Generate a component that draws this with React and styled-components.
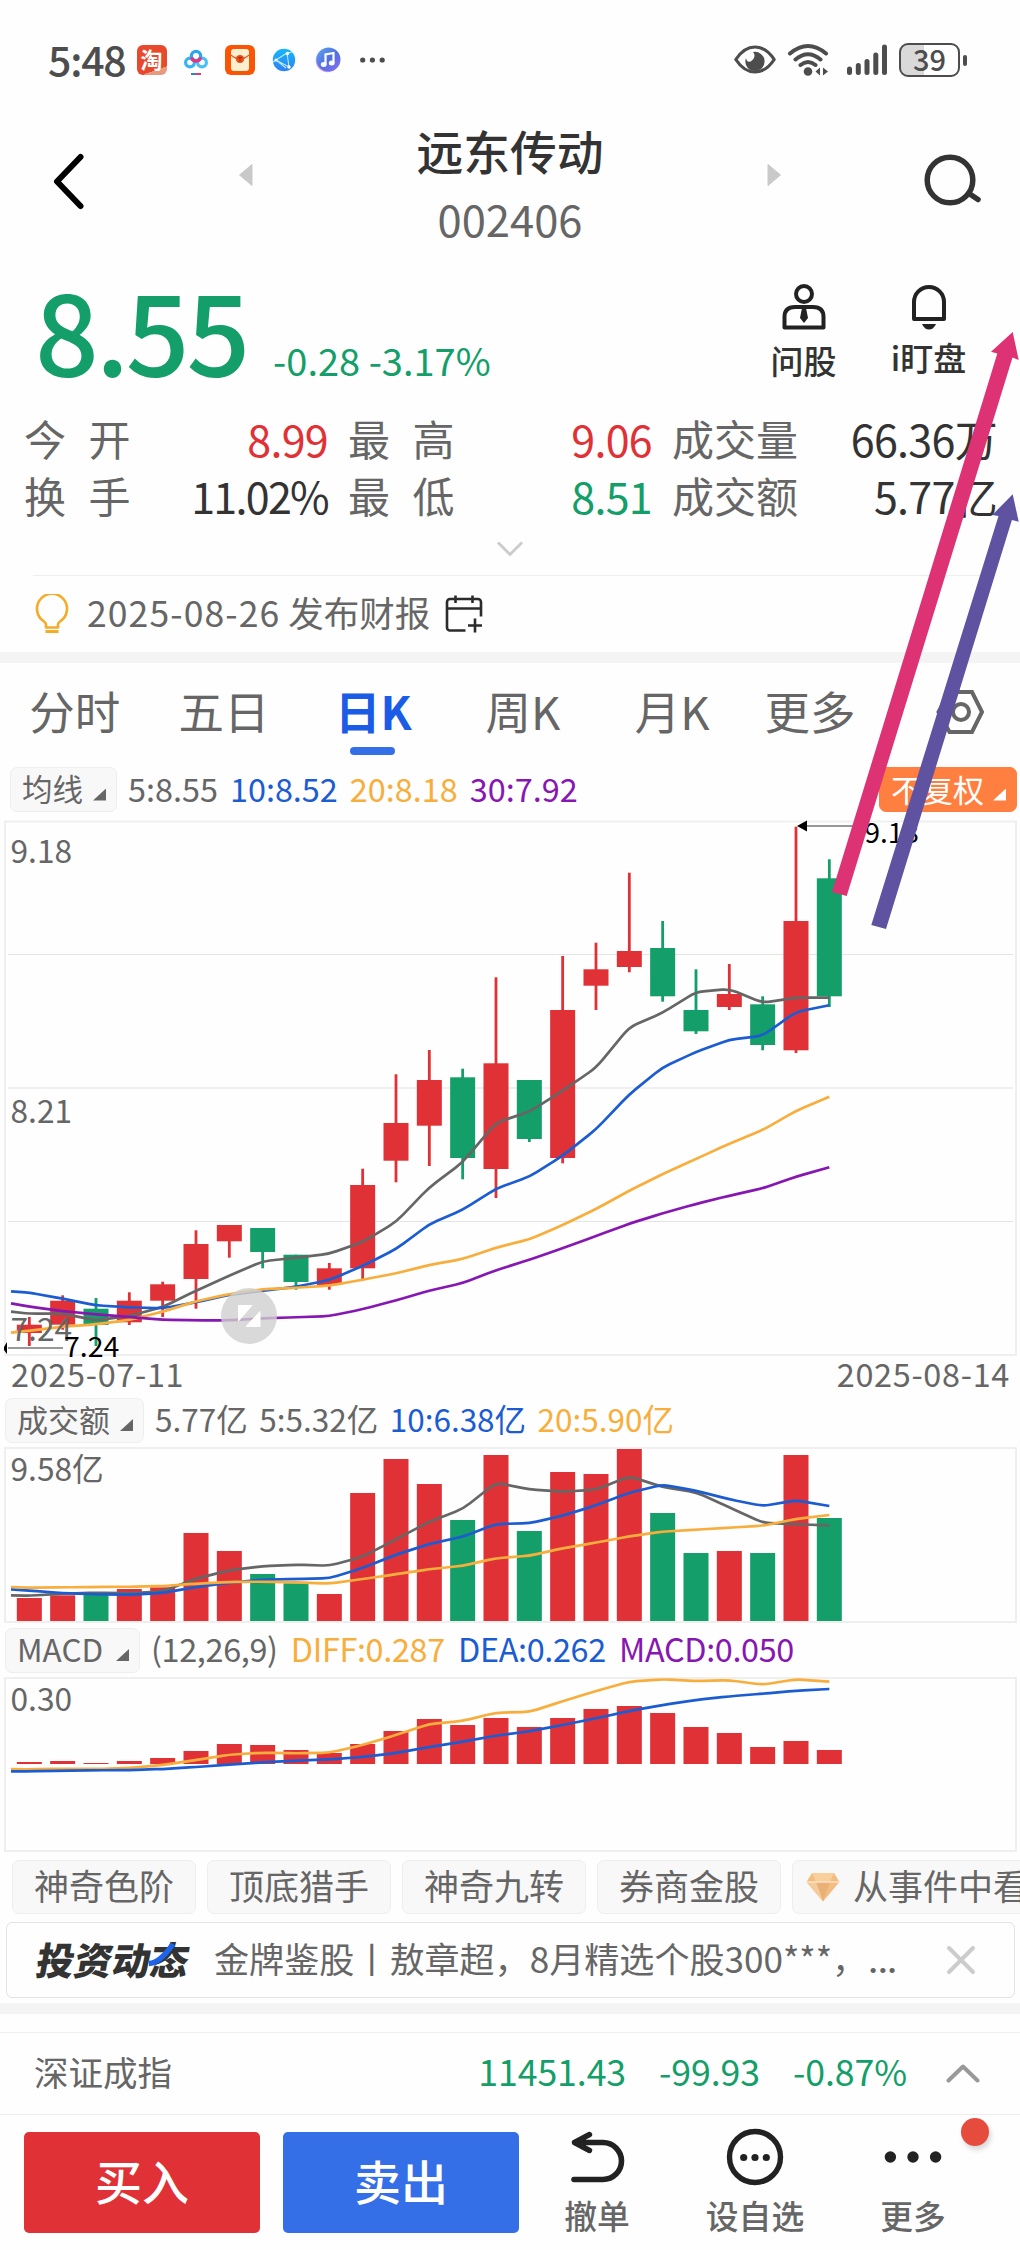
import React from "react";
import styled, { createGlobalStyle } from "styled-components";

const RED = "#e03236";
const GREEN = "#149e69";
const GREY = "#666666";
const BLUE = "#1c5cd2";
const ORANGE = "#f8ae3c";
const PURPLE = "#8717b2";
const FONT = '"Noto Sans CJK SC", "Noto Sans", sans-serif';

const GlobalStyle = createGlobalStyle`
  * { box-sizing: border-box; }
  body { margin: 0; background: #fff; font-family: ${FONT}; }
  svg { display: block; flex: none; }
`;

const Screen = styled.div`
  position: relative;
  width: 1020px;
  height: 2250px;
  overflow: hidden;
  background: #fefefe;
  display: flex;
  flex-direction: column;
  & > * { flex-shrink: 0; }
`;

const Text = styled.span`
  display: block;
  white-space: nowrap;
  line-height: 1.2;
  padding-bottom: 0.09em;
  font-size: ${(p) => p.$size || 32}px;
  color: ${(p) => p.$color || GREY};
  font-weight: ${(p) => p.$weight || 400};
  letter-spacing: ${(p) => p.$ls || 0}px;
`;

/* ---------- status bar ---------- */
const StatusBar = styled.div`
  height: 120px;
  padding: 0 53px 0 48px;
  display: flex;
  align-items: center;
  justify-content: space-between;
`;
const StatusGroup = styled.div`
  display: flex;
  align-items: center;
`;
const SystemIcons = styled(StatusGroup)`
  svg:nth-child(1) { margin-right: 11px; }
  svg:nth-child(2) { margin-right: 18px; }
  svg:nth-child(3) { margin-right: 10px; }
`;
const AppIcons = styled.div`
  display: flex;
  gap: 14px;
  margin-left: 11px;
`;
const TaoIcon = styled.div`
  width: 30px;
  height: 30px;
  border-radius: 6px;
  background: linear-gradient(160deg, #e8492c 0 78%, #e79a7c 78%);
  color: #fff;
  font-size: 22px;
  font-weight: 700;
  line-height: 27px;
  text-align: center;
`;
const Battery = styled.div`
  width: 61px;
  height: 34px;
  border: 2px solid #4d4d4d;
  border-radius: 9px;
  background: linear-gradient(90deg, #d9d9d9 40%, #fefefe 40%);
  display: flex;
  align-items: center;
  justify-content: center;
`;
const BatteryTip = styled.div`
  width: 4px;
  height: 11px;
  margin-left: 3px;
  border-radius: 2px;
  background: #4d4d4d;
`;

/* ---------- header ---------- */
const Header = styled.header`
  height: 150px;
  display: grid;
  grid-template-columns: 239px 14px 1fr 14px 239px;
`;
const HeaderSlot = styled.div`
  padding-left: ${(p) => p.$left || 0}px;
  padding-top: ${(p) => p.$top}px;
`;
const TitleBlock = styled.div`
  display: flex;
  flex-direction: column;
  align-items: center;
  padding-top: 2px;
  gap: 11px;
`;

/* ---------- quote ---------- */
const Quote = styled.section`
  height: 141px;
  display: flex;
  justify-content: space-between;
  padding: 0 29px 0 35px;
`;
const PriceLine = styled.div`
  display: flex;
  align-items: baseline;
  gap: 26px;
  padding-top: 1px;
  color: ${GREEN};
`;
const Price = styled.span`
  font-size: 112px;
  line-height: 112px;
  font-weight: 500;
  letter-spacing: -3.2px;
`;
const Change = styled.span`
  font-size: 38px;
  line-height: 1;
  white-space: pre;
`;
const QuickActions = styled.div`
  display: flex;
  padding-top: 14px;
`;
const QuickAction = styled.div`
  width: 125px;
  display: flex;
  flex-direction: column;
  align-items: center;
  gap: ${(p) => p.$gap}px;
`;
const Stats = styled.section`
  display: grid;
  grid-template-columns: 304px 304px 325px;
  grid-auto-rows: 57px;
  column-gap: 20px;
  padding-left: 24px;
`;
const Stat = styled.div`
  display: flex;
  align-items: center;
  justify-content: space-between;
  padding-top: 2px;
`;
const ExpandRow = styled.div`
  height: 50px;
  padding-bottom: 3px;
  display: flex;
  align-items: center;
  justify-content: center;
`;
const Notice = styled.div`
  height: 77px;
  margin: 0 33px;
  padding-left: 2px;
  border-top: 1px solid #eee;
  display: flex;
  align-items: center;
`;
const NoticeText = styled(Text)`
  margin: 0 15px 0 18px;
`;
const NoticeDate = styled.span`
  letter-spacing: 1.1px;
`;
const Band = styled.div`
  height: 11px;
  margin-top: ${(p) => p.$top || 0}px;
  background: #f4f4f4;
`;

/* ---------- tabs ---------- */
const Tabs = styled.nav`
  height: 98px;
  display: flex;
`;
const Tab = styled.div`
  position: relative;
  flex: none;
  width: ${(p) => p.$w || 149.4}px;
  padding-left: ${(p) => p.$pl || 0}px;
  display: flex;
  align-items: center;
  justify-content: center;
`;
const TabLine = styled.i`
  position: absolute;
  left: 50%;
  bottom: 6px;
  width: 45px;
  height: 8px;
  margin-left: -23px;
  border-radius: 4px;
  background: #346fe7;
`;

/* ---------- chart legends ---------- */
const Legend = styled.div`
  height: ${(p) => p.$h}px;
  padding: ${(p) => p.$pt || 0}px 3px ${(p) => p.$pb || 0}px ${(p) => p.$left}px;
  display: flex;
  align-items: center;
`;
const Chip = styled.div`
  width: ${(p) => p.$w}px;
  height: 45px;
  border-radius: 7px;
  border: 1px solid ${(p) => (p.$solid ? "#ff7f40" : "#eeeeee")};
  background: ${(p) => (p.$solid ? "#ff7f40" : "#f8f8f8")};
  padding: 0 10px 0 11px;
  display: flex;
  align-items: center;
  justify-content: space-between;
`;
const Corner = styled.i`
  width: 13px;
  height: 12px;
  margin-top: 10px;
  background: ${(p) => p.$color};
  clip-path: polygon(100% 0, 100% 100%, 0 100%);
`;
const LegendValues = styled.div`
  flex: 1;
  display: flex;
  gap: ${(p) => p.$gap}px;
  margin-left: 11px;
`;
const DateRow = styled.div`
  height: 36px;
  padding: 0 10px 0 11px;
  display: flex;
  align-items: center;
  justify-content: space-between;
`;

/* ---------- tags and news ---------- */
const Tags = styled.div`
  margin-top: 7px;
  padding-left: 12px;
  display: flex;
  gap: 11px;
`;
const Tag = styled.div`
  flex: none;
  width: ${(p) => p.$w || 184}px;
  height: 54px;
  border: 1px solid #eee;
  border-radius: 7px;
  background: #f8f8f8;
  display: flex;
  align-items: center;
  justify-content: ${(p) => (p.$w ? "flex-start" : "center")};
  padding-left: ${(p) => (p.$w ? 13 : 0)}px;
  gap: 13px;
`;
const News = styled.div`
  height: 76px;
  margin: 8px 5px 0 6px;
  padding-left: 29px;
  border: 1px solid #e3e3e3;
  border-radius: 6px;
  display: flex;
  align-items: center;
`;
const Logo = styled.div`
  position: relative;
  width: 156px;
  svg { position: absolute; left: 111px; top: 3px; }
`;
const LogoText = styled(Text)`
  transform: skewX(-10deg);
  transform-origin: 50% 60%;
`;
const NewsText = styled(Text)`
  width: 732px;
  margin-left: 22px;
`;
const Dots = styled.span`
  font-family: Roboto, sans-serif;
  font-size: 1.3em;
  line-height: 0;
`;

/* ---------- bottom ---------- */
const IndexRow = styled.div`
  height: 83px;
  margin-top: 18px;
  padding: 0 40px 0 34px;
  border-top: 1px solid #eee;
  border-bottom: 1px solid #eee;
  display: flex;
  align-items: center;
`;
const IndexValues = styled.div`
  flex: 1;
  display: flex;
  justify-content: flex-end;
  gap: 33px;
  margin-right: 39px;
`;
const BottomBar = styled.footer`
  height: 135px;
  padding-left: 24px;
  display: flex;
`;
const TradeButton = styled.button`
  width: 236px;
  height: 101px;
  margin: 17px 23px 0 0;
  padding: 0;
  border: 0;
  border-radius: 5px;
  background: ${(p) => p.$bg};
  font-family: inherit;
  display: flex;
  align-items: center;
  justify-content: center;
`;
const Actions = styled.div`
  display: flex;
  margin-left: -23px;
`;
const Action = styled.div`
  position: relative;
  width: ${(p) => p.$w}px;
  padding-top: 13px;
  display: flex;
  flex-direction: column;
  align-items: center;
  gap: 9px;
`;
const Badge = styled.i`
  position: absolute;
  left: 126px;
  top: 3px;
  width: 28px;
  height: 28px;
  border-radius: 50%;
  background: #e64c3e;
  box-shadow: 2px 4px 5px rgba(0, 0, 0, 0.15);
`;
const Annotations = styled.svg`
  position: absolute;
  left: 0;
  top: 0;
  pointer-events: none;
`;

/* ---------- data ---------- */
const xAt = (i) => 29.33 + i * 33.333;

// high, body top, body bottom, low, rising
const candles = [
  [1317, 1324.7, 1333, 1346, 1], [1295.3, 1300.7, 1324.7, 1329.7, 1], [1298, 1308.7, 1325, 1346, 0],
  [1292.3, 1300.7, 1322.3, 1325, 1], [1281.7, 1284.3, 1300.7, 1317, 1], [1230.3, 1244, 1279, 1308.7, 1],
  [1225, 1225, 1241.3, 1257.7, 1], [1228, 1228, 1252, 1268.3, 0], [1254.7, 1254.7, 1282, 1289.7, 0],
  [1263, 1268.3, 1285, 1289.7, 1], [1168.7, 1185, 1268.3, 1279, 1], [1074.3, 1123, 1160.7, 1182.3, 1],
  [1050, 1080, 1125.7, 1166, 1], [1068.7, 1077.3, 1158, 1179.3, 0], [977.3, 1063.3, 1169, 1198, 1],
  [1080, 1080, 1139, 1142, 0], [956, 1010, 1158, 1163.3, 1], [942.7, 969.3, 985.7, 1010, 1],
  [872.7, 951, 967, 972.3, 1], [921, 948, 996.3, 1001.7, 0], [969.3, 1010, 1031.3, 1034, 0],
  [964, 994, 1007, 1010, 1], [996.3, 1004.3, 1045, 1050.3, 0], [826.7, 921, 1050.3, 1053, 1],
  [859.3, 878.3, 996.3, 1007, 0],
];
const ma5 = [1311.7, 1313.7, 1313.7, 1320.3, 1316, 1307, 1290.7, 1275.7, 1261.3, 1257.7, 1253.7, 1242, 1222, 1187.3, 1162.3, 1122.7, 1111.7, 1090.7, 1067.7, 1027.3, 1012.7, 992, 989, 1002.7, 997.7, 997.7];
const ma10 = [1291.3, 1292.7, 1298.7, 1305.3, 1307.3, 1308.3, 1302.3, 1294.7, 1290.7, 1286.7, 1280, 1266, 1249, 1224.3, 1209.7, 1188.7, 1176.7, 1155.7, 1129.3, 1094.3, 1067.3, 1052, 1039.7, 1035.7, 1012, 1005.3];
const ma20 = [1332.7, 1330.7, 1326.7, 1324.3, 1320, 1311.7, 1301.3, 1294, 1289.3, 1287.7, 1285.7, 1279.7, 1273.3, 1265, 1259, 1247.7, 1239.3, 1225, 1209, 1190.7, 1174, 1159, 1143.7, 1130, 1111, 1096.7];
const ma30 = [1303.3, 1306.7, 1311, 1314.3, 1317, 1319.7, 1320.3, 1320.3, 1318.3, 1317.3, 1316, 1309.3, 1300.3, 1290.7, 1283, 1270.3, 1259.7, 1248.3, 1236, 1223.7, 1213.3, 1204, 1195.7, 1188.3, 1176.7, 1167.3];

const volumes = [1598, 1595.3, 1593.5, 1589, 1587.3, 1533, 1551, 1574, 1583.3, 1594, 1493, 1459, 1484, 1520, 1455, 1531, 1472, 1474, 1449, 1513, 1553, 1551, 1553, 1455, 1518];
const vol5 = [1595.3, 1595.7, 1593.7, 1592.7, 1593.3, 1591.3, 1578.7, 1570.3, 1566.3, 1564.7, 1565.7, 1556.7, 1539.3, 1521.7, 1509, 1482.7, 1489.3, 1491.7, 1489.7, 1476.3, 1487, 1492.3, 1507.3, 1522.7, 1524.3, 1525.3];
const vol10 = [1589.3, 1590.7, 1593, 1594.3, 1594.7, 1593, 1587, 1582.7, 1579.7, 1579, 1578.3, 1568, 1554.7, 1544, 1536.7, 1524, 1523.3, 1515.7, 1505.3, 1492.7, 1484.7, 1490.7, 1499.3, 1506, 1500.3, 1506];
const vol20 = [1587, 1587.7, 1587.3, 1587, 1586.7, 1586, 1583.7, 1582, 1581.7, 1582.3, 1583.7, 1579, 1574.3, 1569.3, 1565.7, 1558.3, 1555.7, 1548.3, 1542.7, 1536.3, 1531.7, 1529.7, 1527.7, 1525.7, 1519, 1515];

const macd = [1762, 1761, 1763, 1761, 1758, 1751, 1744, 1745, 1750, 1753, 1744, 1731, 1719, 1725, 1718, 1727, 1718, 1709, 1706, 1713, 1727, 1733, 1747, 1741, 1750];
const diff = [1769, 1769.3, 1768.7, 1769, 1768, 1765, 1760, 1754.7, 1752.7, 1753.3, 1752.7, 1745, 1735, 1724, 1721, 1712.7, 1712, 1701.3, 1691, 1681.7, 1679.3, 1681, 1680.3, 1684.7, 1679.3, 1681.7];
const dea = [1771.3, 1771.3, 1770.7, 1770.3, 1770, 1769, 1767, 1764.7, 1762.3, 1760.7, 1759.3, 1757, 1753, 1747, 1741.7, 1735.7, 1731.3, 1725, 1718.3, 1711, 1705, 1700, 1696.3, 1693.7, 1690.7, 1689];

/* ---------- chart pieces ---------- */
// The first sample sits on the left edge; each corner is rounded with a short quadratic.
function curve(values) {
  const p = values.map((y, i) => [i === 0 ? 11 : xAt(i - 1), y]);
  const t = 0.22;
  let d = `M${p[0][0]} ${p[0][1]}`;
  for (let i = 1; i < p.length - 1; i++) {
    const [a, b, c] = [p[i - 1], p[i], p[i + 1]];
    d += `L${b[0] + (a[0] - b[0]) * t} ${b[1] + (a[1] - b[1]) * t}`;
    d += `Q${b[0]} ${b[1]} ${b[0] + (c[0] - b[0]) * t} ${b[1] + (c[1] - b[1]) * t}`;
  }
  const l = p[p.length - 1];
  return `${d}L${l[0]} ${l[1]}`;
}
const Curve = ({ values, color }) => (
  <path d={curve(values)} fill="none" stroke={color} strokeWidth="2.7" />
);
const Frame = ({ top, bottom }) => (
  <rect x="5" y={top} width="1011" height={bottom - top} fill="none" stroke="#efefef" strokeWidth="2" />
);
const AxisLabel = ({ y, children }) => (
  <text x="10.5" y={y} fontSize="31.7" fontFamily={FONT} fill={GREY}>{children}</text>
);

const KChart = () => (
  <svg width="1020" height="537" viewBox="0 820 1020 537">
    <Frame top={821.5} bottom={1355} />
    <path d="M8 954.5H1013M8 1221.5H1013" stroke="#e4e4e4" />
    <path d="M8 1088H1013" stroke="#f0f0f0" strokeWidth="2" />
    {candles.map(([hi, top, bot, lo, up], i) => (
      <g key={i} fill={up ? RED : GREEN}>
        <rect x={xAt(i) - 1.4} y={hi} width="2.8" height={lo - hi} />
        <rect x={xAt(i) - 12.5} y={top} width="25" height={bot - top} />
      </g>
    ))}
    <Curve values={ma5} color={GREY} />
    <Curve values={ma10} color={BLUE} />
    <Curve values={ma20} color={ORANGE} />
    <Curve values={ma30} color={PURPLE} />
    <AxisLabel y={862.5}>9.18</AxisLabel>
    <AxisLabel y={1123}>8.21</AxisLabel>
    <AxisLabel y={1341}>7.24</AxisLabel>
    <path d="M8 1348H63M806 826H856" stroke="#777" strokeWidth="1.6" />
    <path d="M4 1347L7 1342V1354L4 1350ZM797 826L807 820.5V831.5Z" fill="#000" />
    <text x="64" y="1356.5" fontSize="28.5" fontFamily={FONT} fill="#000">7.24</text>
    <text x="864.5" y="843" fontSize="28" fontFamily={FONT} fill="#000">9.18</text>
    <circle cx="249" cy="1316" r="28" fill="#cfcfcf" opacity="0.8" />
    <path d="M238.5 1305.5H252L238.5 1321ZM260 1326.5H246L260 1311.5Z" fill="#fff" stroke="#fff" strokeWidth="1" strokeLinejoin="round" />
  </svg>
);

const VolumeChart = () => (
  <svg width="1020" height="178" viewBox="0 1446 1020 178">
    <Frame top={1448} bottom={1622} />
    {volumes.map((top, i) => (
      <rect key={i} x={xAt(i) - 12.5} y={top} width="25" height={1621 - top} fill={candles[i][4] ? RED : GREEN} />
    ))}
    <Curve values={vol5} color={GREY} />
    <Curve values={vol10} color={BLUE} />
    <Curve values={vol20} color={ORANGE} />
    <AxisLabel y={1481}>9.58亿</AxisLabel>
  </svg>
);

const MacdChart = () => (
  <svg width="1020" height="177" viewBox="0 1676 1020 177">
    <Frame top={1678} bottom={1851} />
    {macd.map((top, i) => (
      <rect key={i} x={xAt(i) - 12.5} y={top} width="25" height={1764 - top} fill={RED} />
    ))}
    <Curve values={diff} color={ORANGE} />
    <Curve values={dea} color={BLUE} />
    <AxisLabel y={1711}>0.30</AxisLabel>
  </svg>
);

/* ---------- icons ---------- */
const CloudIcon = () => (
  <svg width="30" height="30" viewBox="0 0 30 30" fill="none" strokeWidth="3.2">
    <circle cx="9" cy="17.5" r="4.4" stroke="#35b5f2" />
    <circle cx="21" cy="17.5" r="4.4" stroke="#4cc0f4" />
    <circle cx="15" cy="11" r="4.6" stroke="#2fa4ee" />
    <path d="M10.5 12.5a4.6 4.6 0 0 0 9 0" stroke="#e8327c" />
    <path d="M10 29h5" stroke="#3a7be0" strokeWidth="2" />
    <path d="M15 29h5" stroke="#e0405f" strokeWidth="2" />
  </svg>
);
const EnvelopeIcon = () => (
  <svg width="30" height="30" viewBox="0 0 30 30">
    <rect width="30" height="30" rx="6" fill="#fb5404" />
    <rect x="6" y="4" width="18" height="22" rx="3" fill="#fdf0cf" />
    <path d="M6 10q9 8 18 0" fill="none" stroke="#e2592a" strokeWidth="1.2" />
    <circle cx="15" cy="14" r="4" fill="#ea4f16" />
    <path d="M13 12.5h4M15 12.5v4" stroke="#a82d08" strokeWidth="1" />
  </svg>
);
const NetworkIcon = () => (
  <svg width="30" height="30" viewBox="0 0 30 30">
    <defs>
      <linearGradient id="net" x1="0" y1="0" x2="0" y2="1">
        <stop offset="0" stopColor="#14b8fa" /><stop offset="1" stopColor="#2f80f5" />
      </linearGradient>
    </defs>
    <circle cx="15" cy="15" r="11.2" fill="url(#net)" />
    <path d="M7 15L18 8L20 22ZM4 17L7 15M18 8l5-1M7 15l10 8" fill="none" stroke="#bfe6ff" strokeWidth="1.1" />
    <g fill="#fff"><circle cx="7" cy="15" r="1.5" /><circle cx="18.5" cy="8.5" r="1.7" /><circle cx="20" cy="22" r="1.7" /></g>
  </svg>
);
const MusicIcon = () => (
  <svg width="30" height="30" viewBox="0 0 30 30">
    <defs>
      <linearGradient id="mus" x1="0" y1="0" x2="1" y2="1">
        <stop offset="0" stopColor="#5fa8f0" /><stop offset="0.5" stopColor="#5070e0" /><stop offset="1" stopColor="#8a6ff0" />
      </linearGradient>
    </defs>
    <circle cx="14.5" cy="15.5" r="11.8" fill="#d79bf2" />
    <circle cx="15.5" cy="14.5" r="12" fill="url(#mus)" />
    <path d="M12.5 19.5V9.5L20.5 8V18" fill="none" stroke="#fff" strokeWidth="2.2" />
    <ellipse cx="10.7" cy="19.5" rx="2.9" ry="2.5" fill="#fff" />
    <ellipse cx="18.7" cy="18" rx="2.9" ry="2.5" fill="#fff" />
  </svg>
);
const MoreDots = () => (
  <svg width="30" height="30" viewBox="0 0 30 30" fill="#4d4d4d">
    <circle cx="5.7" cy="15" r="2.6" /><circle cx="15.4" cy="15" r="2.6" /><circle cx="25.2" cy="15" r="2.6" />
  </svg>
);
const EyeIcon = () => (
  <svg width="42" height="34" viewBox="0 0 42 34">
    <path d="M1.8 16.5C7 8.5 14 4 21 4S35 8.5 40.2 16.5C35 24.5 28 29 21 29S7 24.5 1.8 16.5Z" fill="none" stroke="#4d4d4d" strokeWidth="3.2" strokeLinejoin="round" />
    <path d="M19 9A9.6 9.6 0 1 1 12 15Q12.5 19.5 16.5 18.5Q20.5 16 20.5 12.5Q20.5 10.5 19 9Z" fill="#4d4d4d" />
  </svg>
);
const WifiIcon = () => (
  <svg width="42" height="34" viewBox="0 0 42 34" fill="none" stroke="#4d4d4d" strokeWidth="4" strokeLinecap="round">
    <path d="M3 10.5Q21 -4.5 39 10.5M8.5 16.5Q21 6 33.5 16.5M13.5 22Q21 16 28.5 22" />
    <circle cx="21" cy="28.5" r="4.3" fill="#4d4d4d" stroke="none" />
    <path d="M33 24.5v8l-4.5-4ZM36 24.5v8l5-4Z" fill="#4d4d4d" stroke="none" />
  </svg>
);
const SignalIcon = () => (
  <svg width="42" height="34" viewBox="0 0 42 34" stroke="#4d4d4d" strokeWidth="5" strokeLinecap="round">
    <path d="M2.5 26v3.5M11.3 22.5V29.5M20 18.5v11M28.8 12V29.5M37.5 4V29.5" />
  </svg>
);
const SearchIcon = () => (
  <svg width="62" height="54" viewBox="0 0 62 54" fill="none" stroke="#333">
    <circle cx="28" cy="27" r="22.8" strokeWidth="5.5" />
    <path d="M47 40.5L56 46.5" strokeWidth="5.5" strokeLinecap="round" />
  </svg>
);
const PersonIcon = () => (
  <svg width="44" height="46" viewBox="0 0 44 46" fill="none" stroke="#222" strokeWidth="4">
    <circle cx="22" cy="10" r="8" />
    <path d="M2.5 43.5V33Q2.5 23 13 23H31Q41.5 23 41.5 33V43.5Z" strokeLinejoin="round" />
    <path d="M20 24h4l2 10-4 5-4-5Z" fill="#222" stroke="none" />
  </svg>
);
const BellIcon = () => (
  <svg width="36" height="46" viewBox="0 0 36 46">
    <path d="M3 35V18a15 15 0 0 1 30 0V35Z" fill="none" stroke="#222" strokeWidth="4" strokeLinejoin="round" />
    <path d="M11 40H25Q22.5 45.5 18 45.5T11 40Z" fill="#222" />
  </svg>
);
const BulbIcon = () => (
  <svg width="34" height="40" viewBox="0 0 34 40" fill="none" stroke="#f5ab28" strokeWidth="2.6" strokeLinejoin="round">
    <path d="M11 33.5V30.5Q11 29 9 27.5A15 15 0 1 1 25 27.5Q23 29 23 30.5V33.5Z" />
    <path d="M10.5 37.5H23.5" strokeWidth="3" />
  </svg>
);
const CalendarIcon = () => (
  <svg width="38" height="38" viewBox="0 0 38 38" fill="none" stroke="#2b2b2b" strokeWidth="2.6">
    <path d="M20.5 35.5H5a3 3 0 0 1-3-3V7a3 3 0 0 1 3-3H33a3 3 0 0 1 3 3V21.5M2 13.5H36M10.5 .5V8M27.5 .5V8M23 30.5H37M30 23.5V37.5" />
  </svg>
);
const SettingsIcon = () => (
  <svg width="50" height="46" viewBox="0 0 50 46" fill="none" stroke={GREY} strokeWidth="4">
    <path d="M14.5 3H37L47 23L37 43H14.5L3.5 23Z" />
    <circle cx="26" cy="23" r="8" />
  </svg>
);
const GemIcon = () => (
  <svg width="34" height="30" viewBox="0 0 34 30">
    <path d="M6 1H28L33.5 10L17 29.5L.5 10Z" fill="#f3bd82" />
    <path d="M6 1H28L24 10H10Z" fill="#f9cf9c" />
    <path d="M10 10H24L17 29.5Z" fill="#e9b078" />
    <path d="M.5 10H10L17 29.5Z" fill="#f6cb9c" />
    <path d="M.5 10H33.5" stroke="#fbe2c4" strokeWidth="1.3" />
  </svg>
);
const UndoIcon = () => (
  <svg width="58" height="58" viewBox="0 0 58 58" fill="none" stroke="#222" strokeWidth="5.6" strokeLinecap="round" strokeLinejoin="round">
    <path d="M6 51.5H35A18.5 18.5 0 0 0 35 14.5H7" />
    <path d="M21.5 6.5L6.5 14.5L21.5 22.5" strokeWidth="5.4" />
    <path d="M8 14.5L18 9.5V19.5Z" fill="#222" stroke="none" />
  </svg>
);
const CircleDotsIcon = () => (
  <svg width="58" height="58" viewBox="0 0 58 58">
    <circle cx="29" cy="29" r="25.5" fill="none" stroke="#222" strokeWidth="5.4" />
    <g fill="#222"><circle cx="17.7" cy="29.5" r="3.6" /><circle cx="29" cy="29.5" r="3.6" /><circle cx="40.3" cy="29.5" r="3.6" /></g>
  </svg>
);
const BigDotsIcon = () => (
  <svg width="58" height="58" viewBox="0 0 58 58" fill="#222">
    <circle cx="6.4" cy="29" r="5.7" /><circle cx="29" cy="29" r="5.7" /><circle cx="51.6" cy="29" r="5.7" />
  </svg>
);

const stats = [
  ["今开", "8.99", RED, 22.5], ["最高", "9.06", RED, 22.5], ["成交量", "66.36万", "#333"],
  ["换手", "11.02%", "#333", 22.5, -1.7], ["最低", "8.51", GREEN, 22.5], ["成交额", "5.77亿", "#333"],
];

const Values = ({ gap, items, ls, size = 32.4 }) => (
  <LegendValues $gap={gap}>
    {items.map(([text, color]) => (
      <Text key={text} $size={size} $color={color} $ls={ls}>{text}</Text>
    ))}
  </LegendValues>
);

export default function App() {
  return (
    <Screen>
      <GlobalStyle />
      <StatusBar>
        <StatusGroup>
          <Text $size={41} $weight={500} $color="#4d4d4d" $ls={-1.2}>5:48</Text>
          <AppIcons>
            <TaoIcon>淘</TaoIcon>
            <CloudIcon />
            <EnvelopeIcon />
            <NetworkIcon />
            <MusicIcon />
            <MoreDots />
          </AppIcons>
        </StatusGroup>
        <SystemIcons>
          <EyeIcon />
          <WifiIcon />
          <SignalIcon />
          <Battery><Text $size={29} $weight={500} $color="#4d4d4d">39</Text></Battery>
          <BatteryTip />
        </SystemIcons>
      </StatusBar>

      <Header>
        <HeaderSlot $left={50} $top={31}>
          <svg width="36" height="60" viewBox="0 0 36 60" fill="none" stroke="#000" strokeWidth="6" strokeLinecap="round" strokeLinejoin="round">
            <path d="M30.5 6L7 30.5L30.5 55" />
          </svg>
        </HeaderSlot>
        <HeaderSlot $top={44}>
          <svg width="14" height="22" viewBox="0 0 14 22"><path d="M13 .5V21.5L.5 11Z" fill="#c9c9c9" stroke="#c9c9c9" strokeLinejoin="round" /></svg>
        </HeaderSlot>
        <TitleBlock>
          <Text $size={46.8} $weight={500} $color="#333">远东传动</Text>
          <Text $size={43.5}>002406</Text>
        </TitleBlock>
        <HeaderSlot $top={44}>
          <svg width="14" height="22" viewBox="0 0 14 22"><path d="M1 .5V21.5L13.5 11Z" fill="#c9c9c9" stroke="#c9c9c9" strokeLinejoin="round" /></svg>
        </HeaderSlot>
        <HeaderSlot $left={141} $top={33}><SearchIcon /></HeaderSlot>
      </Header>

      <Quote>
        <PriceLine>
          <Price>8.55</Price>
          <Change>-0.28 -3.17%</Change>
        </PriceLine>
        <QuickActions>
          <QuickAction $gap={11}><PersonIcon /><Text $size={33} $weight={500} $color="#333">问股</Text></QuickAction>
          <QuickAction $gap={8}><BellIcon /><Text $size={33} $weight={500} $color="#333">i盯盘</Text></QuickAction>
        </QuickActions>
      </Quote>
      <Stats>
        {stats.map(([label, value, color, ls, valueLs = -0.7]) => (
          <Stat key={label}>
            <Text $size={42} $ls={ls}>{label}</Text>
            <Text $size={43} $ls={valueLs} $color={color}>{value}</Text>
          </Stat>
        ))}
      </Stats>
      <ExpandRow>
        <svg width="28" height="18" viewBox="0 0 28 18" fill="none" stroke="#ccc" strokeWidth="3"><path d="M2 2.5L14 14.5L26 2.5" /></svg>
      </ExpandRow>
      <Notice>
        <BulbIcon />
        <NoticeText $size={35.5}><NoticeDate>2025-08-26</NoticeDate> 发布财报</NoticeText>
        <CalendarIcon />
      </Notice>
      <Band />

      <Tabs>
        <Tab><Text $size={45.5}>分时</Text></Tab>
        <Tab><Text $size={45.5}>五日</Text></Tab>
        <Tab><Text $size={45.5} $weight={700} $color="#1a5ce6">日K</Text><TabLine /></Tab>
        <Tab><Text $size={45.5}>周K</Text></Tab>
        <Tab><Text $size={45.5}>月K</Text></Tab>
        <Tab $w={126}><Text $size={45.5}>更多</Text></Tab>
        <Tab $w={147} $pl={27}><SettingsIcon /></Tab>
      </Tabs>

      <Legend $h={59} $pb={2} $left={10}>
        <Chip $w={107}><Text $size={30.5}>均线</Text><Corner $color={GREY} /></Chip>
        <Values gap={12} items={[["5:8.55", GREY], ["10:8.52", BLUE], ["20:8.18", ORANGE], ["30:7.92", PURPLE]]} />
        <Chip $w={138} $solid><Text $size={31} $color="#fff">不复权</Text><Corner $color="#fff" /></Chip>
      </Legend>
      <KChart />
      <DateRow>
        <Text $size={32.4} $ls={0.7}>2025-07-11</Text>
        <Text $size={32.4} $ls={0.7}>2025-08-14</Text>
      </DateRow>

      <Legend $h={53} $pt={1} $left={5}>
        <Chip $w={139}><Text $size={31}>成交额</Text><Corner $color={GREY} /></Chip>
        <Values gap={11.5} size={31.5} items={[["5.77亿", GREY], ["5:5.32亿", GREY], ["10:6.38亿", BLUE], ["20:5.90亿", ORANGE]]} />
      </Legend>
      <VolumeChart />

      <Legend $h={52} $left={5}>
        <Chip $w={135}><Text $size={31.5}>MACD</Text><Corner $color={GREY} /></Chip>
        <Values gap={13.2} ls={-0.35} items={[["(12,26,9)", GREY], ["DIFF:0.287", ORANGE], ["DEA:0.262", BLUE], ["MACD:0.050", PURPLE]]} />
      </Legend>
      <MacdChart />

      <Tags>
        {["神奇色阶", "顶底猎手", "神奇九转", "券商金股"].map((t) => (
          <Tag key={t}><Text $size={35}>{t}</Text></Tag>
        ))}
        <Tag $w={300}><GemIcon /><Text $size={35}>从事件中看</Text></Tag>
      </Tags>
      <News>
        <Logo>
          <LogoText $size={38} $weight={900} $color="#333">投资动态</LogoText>
          <svg width="32" height="30" viewBox="0 0 32 30"><path d="M2 24.5Q13 24 26 5" fill="none" stroke="#1f63e8" strokeWidth="5.5" /></svg>
        </Logo>
        <NewsText $size={35.1}>金牌鉴股丨敖章超，8月精选个股300***，<Dots>…</Dots></NewsText>
        <svg width="30" height="30" viewBox="0 0 30 30" stroke="#ccc" strokeWidth="4" strokeLinecap="round"><path d="M3 3L27 27M27 3L3 27" /></svg>
      </News>
      <Band $top={5} />

      <IndexRow>
        <Text $size={34.5}>深证成指</Text>
        <IndexValues>
          {["11451.43", "-99.93", "-0.87%"].map((v) => (
            <Text key={v} $size={35.7} $ls={-0.1} $color={GREEN}>{v}</Text>
          ))}
        </IndexValues>
        <svg width="34" height="22" viewBox="0 0 34 22" fill="none" stroke="#999" strokeWidth="4" strokeLinecap="round" strokeLinejoin="round"><path d="M2.5 17.5L17 3.5L31.5 17.5" /></svg>
      </IndexRow>

      <BottomBar>
        <TradeButton $bg={RED}><Text $size={47} $weight={500} $color="#fff">买入</Text></TradeButton>
        <TradeButton $bg="#346fe7"><Text $size={47} $weight={500} $color="#fff">卖出</Text></TradeButton>
        <Actions>
          <Action $w={156}><UndoIcon /><Text $size={32.8} $weight={500}>撤单</Text></Action>
          <Action $w={160}><CircleDotsIcon /><Text $size={32.8} $weight={500}>设自选</Text></Action>
          <Action $w={156}><BigDotsIcon /><Text $size={32.8} $weight={500}>更多</Text><Badge /></Action>
        </Actions>
      </BottomBar>

      <Annotations width="1020" height="2250" viewBox="0 0 1020 2250">
        <path d="M1012.7 332L1018.7 360L1012.5 357.5L846.7 896L832 892L997.3 353.5L991 351.7Z" fill="#dd3375" />
        <path d="M1012.7 494.3L1018.7 521.7L1011.9 520L886 929L871.3 925L998.5 516L992.3 515Z" fill="#5f52a0" />
      </Annotations>
    </Screen>
  );
}
